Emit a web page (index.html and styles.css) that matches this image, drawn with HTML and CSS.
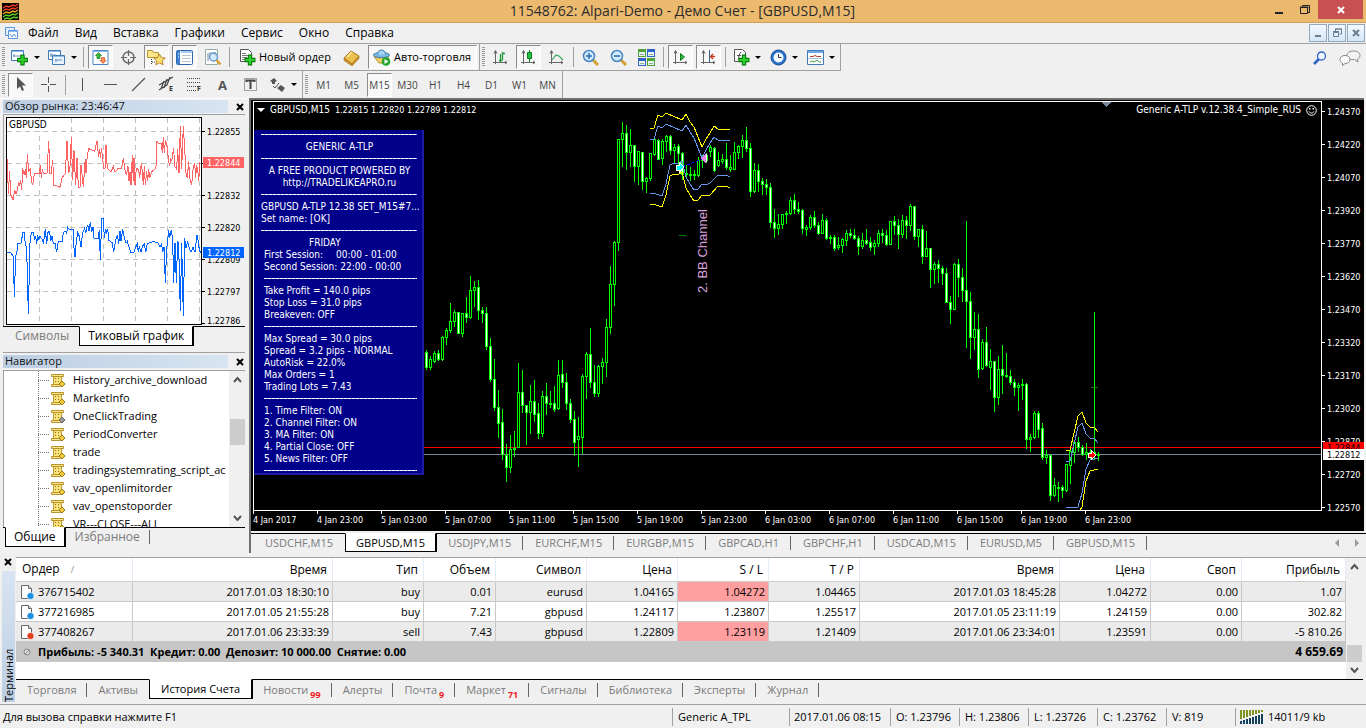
FILE: index.html
```html
<!DOCTYPE html>
<html lang="ru">
<head>
<meta charset="utf-8">
<title>11548762: Alpari-Demo - Демо Счет - [GBPUSD,M15]</title>
<link rel="stylesheet" href="styles.css">
</head>
<body>
<svg class="defs" aria-hidden="true">
  <symbol id="script" viewBox="0 0 15 15">
    <path d="M2.500 3.500h8v9h-8z" fill="#f9e27a" stroke="#c09a34"/>
    <path d="M.5 1.500h12v2H.5z" fill="#fbe88c" stroke="#b8932a"/>
    <path d="M.5 11.500h9v2h-9z" fill="#fbe88c" stroke="#b8932a"/>
    <path d="M4 5h1v1H4zM7 5h1v1H7zM4 8h1v1H4zM7 8h1v1H7z" fill="#8f6d1a"/>
  </symbol>
  <symbol id="doc" viewBox="0 0 16 16">
    <path d="M2.500 1.500h7l3 3v10h-10z" fill="#fff" stroke="#666"/>
    <path d="M9.500 1.500v3h3" fill="#ddd" stroke="#666"/>
    <circle cx="11.500" cy="12" r="3.500" fill="currentColor" stroke="#fff" stroke-width=".6"/>
  </symbol>
  <symbol id="axes" viewBox="0 0 17 17">
    <path d="M3.500 2v13M1 13.500h14M2 4.500l1.500-3 1.500 3M13 12l2 1.500-2 1.500" fill="none" stroke="#666"/>
  </symbol>
  <symbol id="plus" viewBox="0 0 11 11">
    <path d="M4 1h3v3h3v3H7v3H4V7H1V4h3z" fill="#2fd32f" stroke="#0a7d0a"/>
  </symbol>
</svg>

<header class="titlebar">
  <svg class="logo" width="17" height="17" viewBox="0 0 17 17"><path fill="#000" d="M0 0h17v17H0z"/><g fill="none" stroke-width="1.500"><path stroke="#f03a20" d="M1 5l3-2 3 1 4-2 2 1 3-2M1 8l3-2 3 1 4-2 2 1 3-2"/><path stroke="#e8b020" d="M1 11l3-2 3 1 4-2 2 1 3-2"/><path stroke="#58d020" d="M1 14l3-2 3 1 4-2 2 1 3-2M2 16l3-1 3 1 4-2 2 1 2-1"/></g></svg>
  <h1>11548762: Alpari-Demo - Демо Счет - [GBPUSD,M15]</h1>
  <div class="winbtns">
    <button aria-label="Свернуть"><svg width="12" height="12"><path d="M2 8h8v2H2z" fill="#222"/></svg></button>
    <button aria-label="Развернуть"><svg width="12" height="12"><path d="M3.500 2.500v-1h7v7h-2M1.500 3.500h7v6h-7zM1 3h8v1" fill="none" stroke="#222"/></svg></button>
    <button class="close" aria-label="Закрыть"><svg width="12" height="12"><path d="M3 3l6 6M9 3l-6 6" stroke="#fff" stroke-width="2"/></svg></button>
  </div>
</header>

<nav class="menubar">
  <svg width="16" height="16" viewBox="0 0 16 16"><path d="M1.500 2.500h9v8h-9z" fill="#e6f0fb" stroke="#5a94d8"/><path d="M4.500 5.500h9v8h-9z" fill="#fff" stroke="#5a94d8"/><path d="M5 6h8v1H5z" fill="#8fbdf0"/><path d="M6 9l2 3 2-3 2 3" fill="none" stroke="#5a94d8"/></svg>
  <button>Файл</button><button>Вид</button><button>Вставка</button><button>Графики</button><button>Сервис</button><button>Окно</button><button>Справка</button>
  <div class="mdi">
    <button aria-label="Свернуть окно"><svg width="12" height="12"><path d="M3 8h6v2H3z" fill="#6b7f92"/></svg></button>
    <button aria-label="Восстановить окно"><svg width="12" height="12"><path d="M4.500 4v-2h6v5h-2M2.500 5.500h5v4h-5z" fill="none" stroke="#6b7f92"/><path d="M2 4.500h6M4 2h7" stroke="#6b7f92"/></svg></button>
    <button aria-label="Закрыть окно"><svg width="12" height="12"><path d="M3 3l6 6M9 3l-6 6" stroke="#6b7f92" stroke-width="2"/></svg></button>
  </div>
</nav>

<div class="toolrow">
  <div class="toolbar">
    <i class="grip"></i>
    <button class="menu" aria-label="Новый график"><svg width="18" height="17" viewBox="0 0 18 17"><path d="M.5 1.500h12v10H.5z" fill="#fff" stroke="#3d7ab8"/><path d="M1 2h11v1H1z" fill="#8ebcec"/><path d="M3 8V5M2 7h8" stroke="#6a94c0"/><use href="#plus" x="5" y="5" width="13" height="12"/></svg></button>
    <button class="menu" aria-label="Профили"><svg width="18" height="17" viewBox="0 0 18 17"><path d="M.5 1.500h12v9H.5z" fill="#fff" stroke="#3d7ab8"/><path d="M4.500 6.500h12v9h-12z" fill="#e8f2fc" stroke="#3d7ab8"/><path d="M1 2h11v1H1zM5 7h11v1H5z" fill="#8ebcec"/><path d="M3 4v4M2 6h6M7 11h7M8 10v3" stroke="#6a94c0"/></svg></button>
    <i class="sep"></i>
    <button class="on" aria-label="Обзор рынка"><svg width="17" height="17" viewBox="0 0 17 17"><path d="M1 1.500h15v14H1z" fill="#fff" stroke="#4b86c6"/><path d="M1 2h15v1H1z" fill="#8ebcec"/><path d="M6.500 3.500l3 3H8v3H5v-3H3.500z" fill="#3bb83b" stroke="#178017" stroke-width=".7"/><path d="M11 14.500l3-3h-1.500v-3h-3v3H8z" fill="#ff9460" stroke="#d24a10" stroke-width=".7"/></svg></button>
    <button aria-label="Окно данных"><svg width="17" height="17" viewBox="0 0 17 17"><circle cx="8.500" cy="8.500" r="5.500" fill="none" stroke="#666" stroke-width="1.400"/><path d="M8.500 1v6M8.500 10v6M1 8.500h6M10 8.500h6" stroke="#666" stroke-width="1.200"/></svg></button>
    <button class="on" aria-label="Навигатор"><svg width="19" height="17" viewBox="0 0 19 17"><path d="M.5 3.500v-2h5l1 2h5v5h-11z" fill="#fbe58a" stroke="#b8932a"/><path d="M4.500 10v6M5 13h3" stroke="#444" stroke-dasharray="1 1"/><path d="M12.500 5l1.800 3.600 4 .5-3 2.700.8 4-3.600-2-3.600 2 .8-4-3-2.700 4-.5z" fill="#fbe070" stroke="#b8862a"/></svg></button>
    <button class="on" aria-label="Терминал"><svg width="17" height="17" viewBox="0 0 17 17"><rect x=".5" y="1.500" width="16" height="14" rx="1" fill="#fff" stroke="#2d67ad"/><path d="M1 2h3v13H1z" fill="#3b82cf"/><path d="M5 2h11v2H5z" fill="#a8cdf3"/><path d="M6 6.500h9M6 9.500h9M6 12.500h9" stroke="#b4c4d4"/><path d="M2 5h1M2 8h1" stroke="#fff"/></svg></button>
    <button aria-label="Тестер стратегий"><svg width="18" height="17" viewBox="0 0 18 17"><path d="M1.500.5h12v15h-12z" fill="#fff" stroke="#9aa"/><path d="M4 4v8M6 3v5M11 3v4" stroke="#789"/><circle cx="9.500" cy="8" r="4" fill="#c8e4fb" fill-opacity=".8" stroke="#5a94c8" stroke-width="1.300"/><path d="M12.500 11l4 4.500" stroke="#d8a030" stroke-width="2.400"/></svg></button>
    <i class="sep"></i>
    <button class="text"><svg width="17" height="18" viewBox="0 0 17 18"><path d="M1.500 1.500h8l3 3v9h-11z" fill="#fff" stroke="#555"/><path d="M3 5.500h4M3 7.500h7M3 9.500h5M3 11.500h3" stroke="#777"/><use href="#plus" x="5" y="6" width="12" height="12"/></svg>Новый ордер</button>
    <button aria-label="MetaEditor"><svg width="18" height="17" viewBox="0 0 18 17"><path d="M1 9l7-7 8 5-7 8z" fill="#edc04e" stroke="#a87820"/><path d="M1 9l8 6 7-8v2.500L9 17l-8-5.500z" fill="#c8902a" stroke="#a87820" stroke-width=".6"/><path d="M4 8l5-5" stroke="#fbe9a0" stroke-width="1.500"/></svg></button>
    <button class="on text"><svg width="18" height="17" viewBox="0 0 18 17"><path d="M1 7.500c2 2 13 2 15-.500L12 14H6z" fill="#f4d46a" stroke="#b8932a"/><ellipse cx="8.500" cy="6" rx="8" ry="2.500" fill="#7dbdea" stroke="#3d7fae"/><path d="M4.500 5.500C4.500-.5 12.500-.5 12.500 5.500" fill="#a5d5f5" stroke="#3d7fae"/><circle cx="13" cy="12.500" r="4.300" fill="#22a62e"/><path d="M11.500 10l4 2.500-4 2.500z" fill="#fff"/></svg>Авто-торговля</button>
  </div>
  <div class="toolbar">
    <i class="grip"></i>
    <button aria-label="Бары"><svg width="17" height="17"><use href="#axes"/><path d="M8.500 5v8M7 11.500h1M8.500 11.500h2M10.500 3v8M11 4.500h2" stroke="#1f9a3a" fill="none" stroke-width="1.300"/></svg></button>
    <button class="on" aria-label="Свечи"><svg width="17" height="17"><use href="#axes"/><path d="M9.500 1v12" stroke="#087a1c"/><path d="M7.500 3.500h4v6h-4z" fill="#22c043" stroke="#087a1c"/></svg></button>
    <button aria-label="Линия"><svg width="17" height="17"><use href="#axes"/><path d="M4 11l4-5 3 1 4 4" stroke="#3aa65a" fill="none" stroke-width="1.200"/></svg></button>
    <i class="sep"></i>
    <button aria-label="Увеличить"><svg width="18" height="17" viewBox="0 0 18 17"><path d="M10 10l6 6" stroke="#d0a232" stroke-width="3"/><circle cx="7" cy="7" r="5.500" fill="#d3eafc" stroke="#4284c4" stroke-width="1.500"/><path d="M4 7h6M7 4v6" stroke="#2f6fb0" stroke-width="1.600"/></svg></button>
    <button aria-label="Уменьшить"><svg width="18" height="17" viewBox="0 0 18 17"><path d="M10 10l6 6" stroke="#d0a232" stroke-width="3"/><circle cx="7" cy="7" r="5.500" fill="#d3eafc" stroke="#4284c4" stroke-width="1.500"/><path d="M4 7h6" stroke="#2f6fb0" stroke-width="1.600"/></svg></button>
    <button aria-label="Плитка"><svg width="17" height="17" viewBox="0 0 17 17"><path d="M0 0h8v8H0z" fill="#4fa336"/><path d="M9 0h8v8H9zM0 9h8v8H0z" fill="#2f62c8"/><path d="M9 9h8v8H9z" fill="#4fa336"/><path d="M1 3h6v4H1zM10 3h6v4h-6zM1 12h6v4H1zM10 12h6v4h-6z" fill="#e9f2ff"/><path d="M2 5.500h4M11 5.500h4M2 14.500h4M11 14.500h4" stroke="#8fb87c"/></svg></button>
    <i class="sep"></i>
    <button class="on" aria-label="Автопрокрутка"><svg width="17" height="17"><use href="#axes"/><path d="M8.500 4.500l4 3.500-4 3.500z" fill="#2db84a" stroke="#087a1c"/></svg></button>
    <button class="on" aria-label="Сдвиг графика"><svg width="17" height="17"><use href="#axes"/><path d="M9.500 1v12" stroke="#35629c"/><path d="M15 7.500h-4M13 5l-2.500 2.500L13 10" stroke="#c23a18" fill="none" stroke-width="1.300"/></svg></button>
    <i class="sep"></i>
    <button class="menu" aria-label="Индикаторы"><svg width="17" height="18" viewBox="0 0 17 18"><path d="M1.500 1.500h8l3 3v9h-11z" fill="#fff" stroke="#555"/><path d="M5 12c1-2 1-7 3-8M4 7.500h4" fill="none" stroke="#555"/><use href="#plus" x="5" y="6" width="12" height="12"/></svg></button>
    <button class="menu" aria-label="Периоды"><svg width="17" height="17" viewBox="0 0 17 17"><circle cx="8.500" cy="8.500" r="7.500" fill="#2a71cc" stroke="#164a90"/><circle cx="8.500" cy="8.500" r="5" fill="#f3f9ff"/><path d="M8.500 5v3.500h3" fill="none" stroke="#333"/></svg></button>
    <button class="menu" aria-label="Шаблоны"><svg width="17" height="17" viewBox="0 0 17 17"><path d="M.5 1.500h16v14H.5z" fill="#fff" stroke="#3d7ab8"/><path d="M1 2h15v2H1z" fill="#6ea9e6"/><path d="M3 7.500h3l2-1 2 1h4" fill="none" stroke="#b04030"/><path d="M1 9.500h15" stroke="#a9c6e6"/><path d="M3 13l2-1 2 1 3-2 2 2h2" fill="none" stroke="#3a9a4a"/></svg></button>
  </div>
  <div class="tools-right">
    <button aria-label="Поиск"><svg width="14" height="14" viewBox="0 0 14 14"><path d="M1 13l5-5" stroke="#2f62c8" stroke-width="2.600"/><circle cx="8.500" cy="5" r="4" fill="#eef6ff" stroke="#2f62c8" stroke-width="1.300"/></svg></button>
    <button aria-label="Чат"><svg width="22" height="16" viewBox="0 0 22 16"><path d="M14.500 1c4 0 6.500 2 6.500 4.500 0 2-1.500 3-2.500 3.500l.5 3-3.500-2.500C11 10 8 8.500 8 5.500S11 1 14.500 1z" fill="#f4f4f4" stroke="#8a8a8a"/><path d="M6 5.500c3 0 5 1.500 5 4s-2 4-5 4L3.500 15.500v-2.500C2 12.500 1 11 1 9.500c0-2.500 2-4 5-4z" fill="#fafafa" stroke="#8a8a8a"/></svg></button>
  </div>
</div>

<div class="toolrow lines">
  <div class="toolbar">
    <i class="grip"></i>
    <button class="on" aria-label="Курсор"><svg width="17" height="17"><path d="M5 1v12l3-2.500 2 4.500 2-1-2-4.500h4z" fill="#555"/></svg></button>
    <button aria-label="Перекрестие"><svg width="17" height="17"><path d="M8.500 1v6M8.500 10v6M1 8.500h6M10 8.500h6" stroke="#555"/></svg></button>
    <i class="sep"></i>
    <button aria-label="Вертикальная линия"><svg width="17" height="17"><path d="M8.500 2v13" stroke="#555"/></svg></button>
    <button aria-label="Горизонтальная линия"><svg width="17" height="17"><path d="M2 8.500h13" stroke="#555"/></svg></button>
    <button aria-label="Линия тренда"><svg width="17" height="17"><path d="M2 15L15 2" stroke="#555" stroke-width="1.200"/></svg></button>
    <button aria-label="Канал"><svg width="19" height="19"><path d="M2 10l14-8M2 15l8-5M4 14l3-8M7 13l3-9M10 10l3-8" stroke="#444" stroke-width="1.200"/><text x="12" y="16">E</text></svg></button>
    <button aria-label="Фибоначчи"><svg width="19" height="19"><path d="M2 3.500h14M2 7.500h14M2 11.500h14M2 15.500h9" stroke="#444" stroke-dasharray="1 1"/><text x="12" y="16">F</text></svg></button>
    <button class="letter" aria-label="Текст">A</button>
    <button aria-label="Метка"><svg width="17" height="17"><path d="M2.500 2.500h12v12h-12z" fill="none" stroke="#555" stroke-dasharray="1 1"/><path d="M4.500 6V4.500h8V6M8.500 5v8" stroke="#444" stroke-width="2" fill="none"/></svg></button>
    <button class="menu" aria-label="Стрелки"><svg width="17" height="17"><path d="M1 5l4-3 3 3-2 1v2H3V6zM8 12l4-3 4 3-3 4z" fill="#555"/><path d="M4 10l2 2 4-5" fill="none" stroke="#555"/></svg></button>
  </div>
  <div class="toolbar periods">
    <i class="grip"></i>
    <button>M1</button><button>M5</button><button class="on">M15</button><button>M30</button><button>H1</button><button>H4</button><button>D1</button><button>W1</button><button>MN</button>
  </div>
</div>

<main class="work">
  <aside class="side">
    <section class="panel market">
      <header><h2>Обзор рынка: 23:46:47</h2><button aria-label="Закрыть обзор рынка"><svg width="8" height="8"><path d="M1 1l6 6M7 1L1 7" stroke="#000" stroke-width="2"/></svg></button></header>
      <div class="ticks">
        <div class="tickplot">
          <span>GBPUSD</span>
          <svg viewBox="21 60 582 618" preserveAspectRatio="none">
            <g class="tickgrid"><path d="M118 60v618M214 60v618M310 60v618M406 60v618M502 60v618M598 60v618M21 100h582M21 196h582M21 292h582M21 388h582M21 484h582M21 580h582"/></g>
            <polyline class="ask" points="22,183 25,287 29,220 32,290 39,305 44,275 48,287 52,278 56,252 59,263 62,247 65,277 68,211 73,230 76,212 79,239 82,168 86,220 91,213 94,245 98,262 103,228 118,226 121,202 124,240 127,213 130,226 141,226 146,128 150,226 154,226 158,185 162,262 175,265 180,268 186,240 196,226 201,128 206,226 210,205 214,118 218,247 222,157 227,262 231,180 235,268 240,268 243,200 248,247 250,268 254,205 256,183 258,226 262,170 266,152 284,160 291,128 296,178 299,152 302,180 304,150 308,180 311,211 315,211 318,140 322,211 333,222 340,205 345,222 355,211 365,211 370,180 374,211 379,232 384,205 387,250 390,222 393,262 397,170 400,250 402,180 405,262 409,211 416,215 419,240 424,195 427,220 430,262 433,205 436,262 440,220 443,250 446,213 449,240 456,220 465,213 468,205 471,128 475,136 484,136 487,165 490,118 493,165 496,128 500,136 506,190 509,205 512,180 515,190 521,150 524,205 530,213 533,152 537,226 541,84 545,213 550,84 555,170 558,226 562,240 566,190 569,240 575,262 580,205 584,195 587,240 590,200 594,226 596,250 600,192"/>
            <polyline class="bid" points="22,463 33,465 40,475 43,598 47,475 51,458 54,435 60,437 64,435 68,403 72,403 76,437 80,450 85,647 90,435 94,403 100,403 104,425 107,415 110,437 113,410 116,427 120,415 127,425 130,437 136,393 140,437 144,403 149,400 152,430 156,415 160,437 165,435 170,463 175,430 187,430 190,403 196,400 200,405 203,388 207,393 220,393 222,450 225,478 229,430 233,403 238,415 243,447 248,405 254,390 257,405 263,380 267,400 271,372 275,403 279,388 282,420 295,420 298,395 301,487 305,361 310,361 313,420 317,393 320,403 323,393 327,427 337,435 341,463 347,425 352,410 356,437 360,400 363,430 368,393 373,420 378,435 382,430 388,450 392,463 402,463 406,450 412,437 415,463 418,445 423,463 427,445 433,437 437,463 442,437 460,430 475,435 480,447 485,437 488,463 492,447 496,556 500,450 503,430 506,395 509,420 514,395 518,425 521,556 525,435 529,556 533,430 536,440 541,640 545,435 550,655 554,420 558,450 563,430 568,450 573,463 579,447 585,463 591,410 595,430 598,457 603,465"/>
          </svg>
        </div>
        <svg class="tickaxis" width="43" height="212">
          <path d="M0 14.500h3M0 46.500h3M0 78.500h3M0 110.500h3M0 142.500h3M0 174.500h3M0 206.500h3" stroke="#000"/>
          <g><text x="5" y="18">1.22855</text><text x="5" y="82">1.22832</text><text x="5" y="114">1.22820</text><text x="5" y="146">1.22809</text><text x="5" y="178">1.22797</text><text x="5" y="207">1.22786</text></g>
          <path d="M1 40h41v11H1z" fill="#ff6464"/><path d="M1 130h41v11H1z" fill="#0064ff"/>
          <g class="inv"><text x="5" y="49">1.22844</text><text x="5" y="139">1.22812</text></g>
        </svg>
      </div>
      <div class="tabs"><button>Символы</button><button class="active">Тиковый график</button></div>
    </section>
    <section class="panel navigator">
      <header><h2>Навигатор</h2><button aria-label="Закрыть навигатор"><svg width="8" height="8"><path d="M1 1l6 6M7 1L1 7" stroke="#000" stroke-width="2"/></svg></button></header>
      <div class="treebox">
        <ul class="tree">
          <li><svg><use href="#script"/><path class="gem" d="M11 8l3 3-3 3-3-3z"/></svg>History_archive_download</li>
          <li><svg><use href="#script"/><path class="gem" d="M11 8l3 3-3 3-3-3z"/></svg>MarketInfo</li>
          <li><svg><use href="#script"/><path class="gem grey" d="M11 8l3 3-3 3-3-3z"/></svg>OneClickTrading</li>
          <li><svg><use href="#script"/><path class="gem" d="M11 8l3 3-3 3-3-3z"/></svg>PeriodConverter</li>
          <li><svg><use href="#script"/><path class="gem" d="M11 8l3 3-3 3-3-3z"/></svg>trade</li>
          <li><svg><use href="#script"/><path class="gem" d="M11 8l3 3-3 3-3-3z"/></svg>tradingsystemrating_script_ac</li>
          <li><svg><use href="#script"/><path class="gem" d="M11 8l3 3-3 3-3-3z"/></svg>vav_openlimitorder</li>
          <li><svg><use href="#script"/><path class="gem" d="M11 8l3 3-3 3-3-3z"/></svg>vav_openstoporder</li>
          <li><svg><use href="#script"/><path class="gem" d="M11 8l3 3-3 3-3-3z"/></svg>VR---CLOSE---ALL</li>
        </ul>
        <div class="scroll nav-scroll">
          <svg width="9" height="8"><path d="M1 6l3.500-4L8 6" /></svg><i></i><svg width="9" height="8"><path d="M1 2l3.500 4L8 2"/></svg>
        </div>
      </div>
      <div class="tabs"><button class="active">Общие</button><button class="bar">Избранное</button></div>
    </section>
  </aside>

  <section class="chartwin">
    <div class="chart">
      <div class="plot">
        <svg class="drawing"><g id="drawing" transform="translate(-254 -102)">
          <path d="M254 447.500h1080" stroke="#f00"/><path d="M254 454.500h1080" stroke="#778899"/>
          <path id="wicks" stroke="#0f0"/><path id="up" fill="#000" stroke="#0f0"/><path id="down" fill="#fff" stroke="#0f0"/>
          <path d="M679 235.500h7M1091 387.500h7" stroke="#008000"/>
          <g class="outer"><polyline points="650,128 654,128 658,115 662,117 666,113 682,120 686,114 690,122 694,127 702,147 706,139 710,133 714,126 718,129 726,129 730,130"/><polyline points="650,204 656,205 662,207 666,195 670,176 674,174 678,175 682,172 686,188 690,195 694,201 698,200 702,195 706,196 710,195 718,186 726,186 730,188"/><polyline points="1066,450 1070,450 1074,433 1078,416 1082,412 1086,423 1090,427 1094,427 1098,432"/><polyline points="1080,510 1082,507 1086,481 1090,471 1094,470 1098,469"/></g>
          <g class="inner"><polyline points="650,139 654,139 658,126 662,128 666,124 682,131 686,125 690,132 694,138 702,158 706,150 710,143 714,137 718,140 726,140 730,141"/><polyline points="650,193 656,194 662,196 666,184 670,165 674,163 678,164 682,161 686,177 690,184 694,190 698,189 702,184 706,185 710,183 718,175 726,175 730,177"/><polyline points="1066,461 1070,461 1074,444 1078,427 1082,423 1086,434 1090,438 1094,438 1098,443"/><polyline points="1066,507 1072,507 1074,508 1078,507 1082,493 1086,469 1090,460 1094,459 1098,458"/></g>
          <path d="M682 167l20-8" stroke="#00f" stroke-dasharray="3 2"/>
          <path d="M676 165h3v-3l5 5-5 6v-3h-3z" fill="#0ff" stroke="#fff"/>
          <path d="M706 153v11l-5-5z" fill="#ee82ee"/><path d="M706.500 154v8" stroke="#fff"/>
          <path d="M1088 453h3v-3l5 5-5 5v-3h-3z" fill="#f00" stroke="#fff"/>
          <path d="M1101 102h11l-5.500 5z" fill="#778899"/>
          <text class="note" transform="translate(707 293) rotate(-90)">2. BB Channel</text>
        </g></svg>
        <div class="caption"><svg width="8" height="5"><path d="M0 0h8L4 4z" fill="#fff"/></svg><span class="pair">GBPUSD,M15</span><span>1.22815 1.22820 1.22789 1.22812</span><span class="expert">Generic A-TLP v.12.38.4_Simple_RUS</span><svg width="11" height="11"><circle cx="5.500" cy="5.500" r="4.800" fill="none" stroke="#fff"/><path d="M3 3h1.500v1.500H3zM6.500 3H8v1.500H6.500z" fill="#fff"/><path d="M3 6.500c1 2 4 2 5 0" fill="none" stroke="#fff"/></svg></div>
        <div class="info">
          <hr><p class="mid">GENERIC A-TLP</p><hr>
          <p class="mid">A FREE PRODUCT POWERED BY</p><p class="mid">http://TRADELIKEAPRO.ru</p><hr>
          <p class="out">GBPUSD A-TLP 12.38 SET_M15#7...</p><p class="out">Set name: [OK]</p><hr>
          <p class="day">FRIDAY</p><p class="session"><span>First Session:</span>00:00 - 01:00</p><p class="session"><span>Second Session:</span>22:00 - 00:00</p><hr class="short">
          <p>Take Profit = 140.0 pips</p><p>Stop Loss = 31.0 pips</p><p>Breakeven: OFF</p><hr class="short">
          <p>Max Spread = 30.0 pips</p><p>Spread = 3.2 pips - NORMAL</p><p>AutoRisk = 22.0%</p><p>Max Orders = 1</p><p>Trading Lots = 7.43</p><hr class="short">
          <p>1. Time Filter: ON</p><p>2. Channel Filter: ON</p><p>3. MA Filter: ON</p><p>4. Partial Close: OFF</p><p>5. News Filter: OFF</p><hr class="short">
        </div>
      </div>
      <svg class="prices" id="prices" width="42" height="416"></svg>
      <div class="times"><span>4 Jan 2017</span><span>4 Jan 23:00</span><span>5 Jan 03:00</span><span>5 Jan 07:00</span><span>5 Jan 11:00</span><span>5 Jan 15:00</span><span>5 Jan 19:00</span><span>5 Jan 23:00</span><span>6 Jan 03:00</span><span>6 Jan 07:00</span><span>6 Jan 11:00</span><span>6 Jan 15:00</span><span>6 Jan 19:00</span><span>6 Jan 23:00</span></div>
    </div>
    <div class="tabs charttabs"><button>USDCHF,M15</button><button class="active">GBPUSD,M15</button><button class="bar">USDJPY,M15</button><button class="bar">EURCHF,M15</button><button class="bar">EURGBP,M15</button><button class="bar">GBPCAD,H1</button><button class="bar">GBPCHF,H1</button><button class="bar">USDCAD,M15</button><button class="bar">EURUSD,M5</button><button class="bar">GBPUSD,M15</button>
      <svg width="24" height="8"><path d="M4 0v8L0 4zM20 0v8l4-4z" fill="#999"/></svg></div>
  </section>
</main>

<section class="terminal">
  <div class="strip"><button aria-label="Закрыть терминал"><svg width="8" height="8"><path d="M1 1l6 6M7 1L1 7" stroke="#000" stroke-width="2"/></svg></button><h2>Терминал</h2></div>
  <div class="termbody">
    <div class="tablewrap">
      <table>
        <colgroup><col class="c-order"><col class="c-time"><col class="c-price"><col class="c-vol"><col class="c-price"><col class="c-price"><col class="c-price"><col class="c-price"><col class="c-time"><col class="c-price"><col class="c-price"><col></colgroup>
        <thead><tr><th>Ордер <small>/</small></th><th>Время</th><th>Тип</th><th>Объем</th><th>Символ</th><th>Цена</th><th>S / L</th><th>T / P</th><th>Время</th><th>Цена</th><th>Своп</th><th>Прибыль</th></tr></thead>
        <tbody>
          <tr><td><svg class="buy"><use href="#doc"/></svg>376715402</td><td>2017.01.03 18:30:10</td><td>buy</td><td>0.01</td><td>eurusd</td><td>1.04165</td><td class="hit">1.04272</td><td>1.04465</td><td>2017.01.03 18:45:28</td><td>1.04272</td><td>0.00</td><td>1.07</td></tr>
          <tr><td><svg class="buy"><use href="#doc"/></svg>377216985</td><td>2017.01.05 21:55:28</td><td>buy</td><td>7.21</td><td>gbpusd</td><td>1.24117</td><td>1.23807</td><td>1.25517</td><td>2017.01.05 23:11:19</td><td>1.24159</td><td>0.00</td><td>302.82</td></tr>
          <tr><td><svg class="sell"><use href="#doc"/></svg>377408267</td><td>2017.01.06 23:33:39</td><td>sell</td><td>7.43</td><td>gbpusd</td><td>1.22809</td><td class="hit">1.23119</td><td>1.21409</td><td>2017.01.06 23:34:01</td><td>1.23591</td><td>0.00</td><td>-5 810.26</td></tr>
        </tbody>
        <tfoot><tr><td colspan="11"><svg><circle cx="8" cy="8" r="3" fill="#ddd" stroke="#888"/><path d="M6 10l4-4" stroke="#888"/></svg>Прибыль: -5 340.31&nbsp; Кредит: 0.00&nbsp; Депозит: 10 000.00&nbsp; Снятие: 0.00</td><td>4 659.69</td></tr></tfoot>
      </table>
      <div class="scroll term-scroll"><svg width="9" height="8"><path d="M1 6l3.500-4L8 6"/></svg><i></i><svg width="9" height="8"><path d="M1 2l3.500 4L8 2"/></svg></div>
    </div>
    <div class="tabs termtabs"><button class="bar">Торговля</button><button>Активы</button><button class="active">История Счета</button><button class="bar">Новости<sub>99</sub></button><button class="bar">Алерты</button><button class="bar">Почта<sub>9</sub></button><button class="bar">Маркет<sub>71</sub></button><button class="bar">Сигналы</button><button class="bar">Библиотека</button><button class="bar">Эксперты</button><button class="bar">Журнал</button></div>
  </div>
</section>

<footer class="status">
  <span class="help">Для вызова справки нажмите F1</span><span class="s-wide">Generic A_TPL</span><span class="s-date">2017.01.06 08:15</span><span>O: 1.23796</span><span>H: 1.23806</span><span>L: 1.23726</span><span>C: 1.23762</span><span>V: 819</span>
  <span class="s-net"><svg width="24" height="14"><path d="M1 0v9M4 0v8M7 0v7M10 0v6M13 0v5M16 0v4M19 0v3M22 0v2" stroke="#7d9220" stroke-width="2"/><path d="M1 11v3M4 10v4M7 9v5M10 8v6M13 7v7M16 6v8M19 5v9M22 4v10" stroke="#12405e" stroke-width="2"/></svg>14011/9 kb</span>
</footer>
<script src="chart.js"></script>
</body>
</html>
```

FILE: styles.css
```css
:root {
  --ui: "Open Sans", "Noto Sans", sans-serif;
  --tahoma: "DejaVu Sans Condensed", "Open Sans", sans-serif;
  --face: #f0f0f0;
  --line: #a0a0a0;
}
* { box-sizing: border-box; }
body {
  margin: 0;
  min-height: 100vh;
  display: flex;
  flex-direction: column;
  background: var(--face);
  color: #000;
  font: 11px/16px var(--ui);
}
button { margin: 0; padding: 0; border: 0; background: none; font: inherit; color: inherit; white-space: nowrap; }
svg { display: block; flex: none; }
h1, h2, p, ul { margin: 0; padding: 0; font-weight: normal; }
.defs { position: absolute; width: 0; height: 0; }

.titlebar { display: flex; align-items: center; height: 23px; background: #ebba6f; border-bottom: 1px solid #cda05c; }
.titlebar .logo { margin-left: 2px; }
.titlebar h1 { flex: 1; padding-left: 80px; text-align: center; font-size: 14px; line-height: 22px; color: #2b2b2b; }
.winbtns { display: flex; align-self: flex-start; align-items: center; }
.winbtns button { width: 26px; height: 19px; display: grid; place-items: center; }
.winbtns .close { width: 45px; margin-right: 3px; background: #c75050; }

.menubar { display: flex; align-items: center; height: 21px; padding-left: 4px; border-bottom: 1px solid var(--line); font-size: 12px; }
.menubar > button { padding: 0 8px; }
.mdi { display: flex; gap: 1px; margin: 0 1px 0 auto; }
.mdi button { width: 18px; height: 18px; display: grid; place-items: center; border: 1px solid #93a9bf; background: linear-gradient(#f4f9fe, #d5e6f6); }

.toolrow { display: flex; height: 27px; }
.toolbar { display: flex; align-items: center; gap: 3px; padding: 0 2px; border-right: 1px solid var(--line); border-bottom: 1px solid var(--line); }
.toolbar button { display: flex; align-items: center; justify-content: center; gap: 3px; min-width: 25px; height: 24px; border: 1px solid transparent; }
.toolbar .on { border-color: #8c8c8c #fff #fff #8c8c8c; background: #f8f8f8; }
.toolbar .menu { width: 34px; gap: 5px; }
.toolbar .menu::after { content: ""; border: 3px solid transparent; border-top-color: #000; border-bottom: 0; }
.toolbar .text { padding: 0 5px 0 4px; }
.grip { width: 3px; height: 20px; background: repeating-linear-gradient(#999 0 1px, #f0f0f0 1px 2px); }
.sep { width: 1px; height: 20px; margin: 0 1px; background: var(--line); }
.tools-right { display: flex; align-items: center; gap: 12px; margin: 0 5px 0 auto; }
.lines .toolbar { border-bottom: 0; }
.lines text { font: bold 7px var(--ui); fill: #333; }
.letter { font: bold 13px var(--ui); color: #555; }
.periods { font: 10px "Open Sans", sans-serif; color: #444; }

.work { display: flex; flex: 1; }
.side { width: 249px; padding: 1px 4px 0 3px; display: flex; flex-direction: column; border-top: 1px solid #fff; }
.panel header { display: flex; align-items: center; justify-content: space-between; height: 13px; padding-right: 1px; }
.panel h2 { flex: 1; margin-right: 8px; padding-left: 2px; height: 13px; background: linear-gradient(90deg, #bccee3, #d8e4f1); color: #111; font-size: 11px; line-height: 12px; }
.market { height: 252px; }
.navigator { padding-top: 2px; border-top: 1px solid var(--line); }
.ticks { display: flex; height: 212px; margin-top: 1px; padding: 2px 0 0 2px; border: solid var(--line); border-width: 1px 0 0 1px; }
.tickplot { position: relative; flex: 1; height: 208px; border: 1px solid #000; background: #fff; }
.tickplot svg { width: 100%; height: 100%; shape-rendering: crispEdges; }
.tickplot span { position: absolute; left: 2px; top: 1px; background: #fff; font: 10px/12px var(--tahoma); }
.tickplot polyline, .tickgrid path { fill: none; vector-effect: non-scaling-stroke; }
.tickgrid path { stroke: #c0c0c0; stroke-dasharray: 5 4; }
.ask { stroke: #ff6464; }
.bid { stroke: #0064ff; }
.tickaxis text { font: 9px var(--tahoma); }
.tickaxis .inv { fill: #fff; }

.tabs { display: flex; align-items: flex-start; border-top: 1px solid #000; color: #7b7b7b; }
.tabs button { padding: 0 10px; height: 18px; }
.tabs .active { margin-top: -1px; height: 20px; background: #fff; color: #000; border: 1px solid #000; border-top-color: #fff; box-shadow: 1px 0 0 #000; }
.tabs .bar { background: linear-gradient(#666, #666) right center / 1px 14px no-repeat; }
.side .tabs { padding-left: 2px; font-size: 12px; }
.side .tabs .active { padding: 0 8px; }
.treebox { display: flex; height: 157px; margin-top: 2px; border: solid var(--line); border-width: 1px 0 0 1px; background: #fff; }
.tree { flex: 1; overflow: hidden; list-style: none; margin-left: 34px; background: repeating-linear-gradient(#777 0 1px, #fff 1px 2px) 0 0 / 1px 100% no-repeat; }
.tree li { display: flex; align-items: center; height: 18px; line-height: 18px; white-space: nowrap; }
.tree li::before { content: ""; width: 11px; margin-right: 2px; border-top: 1px dotted #777; flex: none; }
.tree svg { width: 15px; height: 15px; margin-right: 7px; }
.gem { fill: #f0c83c; stroke: #9c7a18; }
.gem.grey { fill: #999; stroke: #666; }
.scroll { display: flex; flex-direction: column; align-items: center; justify-content: space-between; width: 16px; padding: 5px 0; background: var(--face); }
.scroll path { fill: none; stroke: #555; stroke-width: 2; }
.scroll i { width: 15px; background: #cdcdcd; }
.nav-scroll i { height: 26px; margin-bottom: 34px; }
.term-scroll i { height: 17px; margin-top: 69px; }

.chartwin { flex: 1; min-width: 0; display: flex; flex-direction: column; border-left: 2px solid #707070; }
.chart { flex: 1; display: grid; grid-template-columns: 1fr 42px; grid-template-rows: 416px auto; margin-right: 2px; padding: 1px 0 0 2px; background: #000; border-top: 2px solid #707070; color: #fff; font: 9px/12px var(--tahoma); }
.plot { position: relative; height: 410px; overflow: hidden; border: 1px solid #fff; }
.drawing { position: absolute; left: 0; top: 0; width: 100%; height: 100%; shape-rendering: crispEdges; }
.outer, .inner { fill: none; }
.outer { stroke: #ff0; }
.inner { stroke: #6495ed; }
.note { fill: #dda0dd; font: 13px "Liberation Sans", sans-serif; }
.caption { position: relative; display: flex; align-items: center; gap: 5px; padding: 2px 4px 0 3px; }
.caption .pair { font-size: 10px; }
.expert { margin-left: auto; font-size: 10px; }
.info { position: absolute; left: 0; top: 28px; width: 170px; padding: 1px 7px 1px 10px; background: #00008b; border: solid #1c1ca4; border-width: 0 2px 2px 0; white-space: nowrap; font-size: 10px; }
.info p { height: 12px; }
.info .mid { text-align: center; }
.info .out { margin-left: -3px; }
.info .day { padding-left: 45px; }
.info .session { display: flex; gap: 3px; }
.info hr { height: 2px; margin: 5px -2px 5px -3px; border: 0; background: repeating-linear-gradient(90deg, #fff 0 3px, #a8a8dc 3px 4px) 0 0 / 100% 1px no-repeat; }
.info hr:first-child { margin-top: 3px; }
.info hr:last-child { margin-bottom: 0; }
.info hr.short { margin-left: 0; }
.session span { min-width: 69px; }
.prices text { font: 9px var(--tahoma); fill: #fff; }
.prices .dark { fill: #000; }
.times { grid-column: 1 / 3; display: flex; height: 20px; margin-top: -6px; overflow: hidden; }
.times span { flex: none; width: 64px; padding-top: 3px; background: linear-gradient(#fff, #fff) 0 0 / 1px 3px no-repeat; }
.charttabs { margin-top: 2px; height: 20px; }
.charttabs button { padding: 0 12px; }
.charttabs .active { height: 19px; padding: 0 10px; }
.charttabs > svg { margin: 5px 7px 0 auto; }
.charttabs button:first-child { padding-left: 14px; }

.terminal { display: flex; height: 152px; padding-top: 4px; border-bottom: 1px solid var(--line); }
.strip { display: flex; flex-direction: column; width: 16px; align-items: center; gap: 5px; padding-top: 1px; }
.strip h2 { flex: 1; width: 13px; margin-bottom: 2px; line-height: 13px; writing-mode: vertical-rl; transform: rotate(180deg); background: linear-gradient(#bccee3, #d8e4f1); font-size: 11px; }
.termbody { flex: 1; min-width: 0; border-top: 1px solid var(--line); }
.tablewrap { display: flex; align-items: stretch; height: 121px; margin-right: 4px; background: #fff; }
table { flex: 1; align-self: flex-start; width: 100%; table-layout: fixed; border-collapse: separate; border-spacing: 0; }
.c-order { width: 117px; }
.c-time { width: 200px; }
.c-price { width: 91px; }
.c-vol { width: 72px; }
th, td { padding: 0 3px 0 0; text-align: right; font-weight: normal; white-space: nowrap; overflow: hidden; }
th { height: 24px; padding-right: 5px; border-right: 1px solid #e2ecf6; border-bottom: 1px solid #ccc; font-size: 12px; }
th small { margin-left: 8px; color: #888; font-size: 9px; }
tbody td { height: 20px; border-right: 1px solid #c8c8c8; border-bottom: 1px solid #c8c8c8; }
tbody tr:nth-child(odd) { background: #ebebeb; }
tbody td.hit { background: #ff9f9f; }
th:first-child { padding-left: 6px; text-align: left; }
td:first-child { text-align: left; }
td svg { float: left; width: 16px; height: 16px; margin: 0 3px 0 3px; }
.buy { color: #1c8fe0; }
.sell { color: #e0401c; }
tfoot td { height: 20px; background: #c6c6c6; font-weight: bold; }
tfoot td:last-child { font-size: 12px; }
.termtabs { margin-right: 3px; height: 25px; }
.termtabs button { height: 20px; padding: 0 11px; }
sub { margin-left: 2px; color: #f01820; font-size: 9px; font-weight: bold; line-height: 0; vertical-align: -4px; }

.status { display: flex; align-items: center; height: 23px; padding-left: 3px; }
.status span { width: 69px; padding-left: 5px; line-height: 18px; border-left: 1px solid var(--line); white-space: nowrap; }
.status .help { flex: 1; padding: 0; border: 0; }
.status .s-wide { width: 117px; }
.status .s-date { width: 101px; padding-left: 4px; }
.status .s-net { display: flex; align-items: center; gap: 4px; width: 131px; padding-left: 4px; }
```

FILE: chart.js
```js
// Candles, four pixels apart: high, body top, body bottom, low, falling
const candles = [
  [350,352,367,369,1],[356,359,367,369,0],[351,353,361,362,0],[350,353,359,360,1],[336,337,359,360,0],[328,330,337,344,0],
  [303,321,330,332,0],[310,312,321,326,0],[312,312,333,333,1],[313,313,333,336,0],[297,313,317,322,1],[276,290,317,318,0],
  [281,287,290,306,0],[280,287,310,319,1],[307,310,313,322,1],[307,313,346,349,1],[338,346,379,381,1],[359,379,407,410,1],
  [390,407,423,437,1],[409,422,454,459,1],[444,455,467,481,1],[435,449,467,472,0],[431,448,449,456,1],[363,392,447,447,0],
  [370,392,405,412,1],[405,405,412,444,1],[385,401,412,433,0],[380,401,414,421,1],[403,413,433,438,1],[391,396,433,436,0],
  [383,396,403,414,1],[391,403,404,407,1],[386,403,409,411,1],[360,375,408,409,0],[360,374,382,387,1],[373,382,403,409,1],
  [399,403,419,422,1],[411,419,442,455,1],[417,436,439,466,0],[374,376,437,453,0],[352,354,376,398,0],[328,354,382,387,1],
  [365,382,393,396,1],[365,366,393,396,0],[358,362,366,383,0],[319,327,362,376,0],[266,284,327,333,0],[241,242,284,305,0],
  [139,139,242,250,0],[122,133,139,166,0],[125,133,152,169,1],[129,145,152,166,0],[145,145,166,181,1],[151,151,166,184,0],
  [152,152,181,189,1],[177,178,181,192,0],[153,153,178,180,0],[139,139,154,155,0],[139,140,159,159,1],[139,141,158,164,0],
  [135,136,141,151,0],[135,136,150,154,1],[144,147,150,163,0],[144,146,153,166,1],[152,153,174,179,1],[165,173,174,178,1],
  [167,174,175,180,0],[170,174,175,179,0],[157,160,175,176,0],[155,156,160,167,0],[153,155,160,162,1],[145,147,151,156,0],
  [147,148,170,171,1],[152,160,165,166,0],[154,159,161,163,0],[143,159,167,169,1],[155,167,169,171,0],[142,152,169,169,0],
  [145,146,152,158,0],[135,140,146,157,0],[127,140,148,151,1],[143,148,191,196,1],[163,170,191,192,0],[164,170,181,191,1],
  [178,181,184,194,1],[179,184,187,194,1],[183,187,222,227,1],[209,222,228,237,1],[214,224,228,234,0],[214,214,224,228,0],
  [211,213,214,223,1],[197,200,213,214,0],[194,200,209,213,1],[202,209,211,213,1],[209,210,228,233,1],[225,227,229,235,0],
  [215,217,227,229,0],[211,217,225,227,1],[222,225,233,234,1],[214,220,233,233,0],[218,220,238,239,1],[235,237,238,243,1],
  [235,237,248,250,1],[237,245,247,249,0],[238,239,245,252,0],[230,233,240,245,0],[229,233,235,237,1],[229,235,238,239,1],
  [236,238,246,254,1],[233,240,246,248,0],[229,240,243,244,1],[237,242,247,250,1],[240,243,246,254,0],[230,233,243,246,0],
  [229,233,235,242,1],[230,235,244,245,1],[221,221,244,244,0],[216,221,225,234,1],[219,225,234,248,1],[215,220,234,237,0],
  [216,220,225,238,1],[204,206,225,230,0],[206,206,236,239,1],[229,229,236,246,0],[225,229,256,263,1],[231,248,256,256,0],
  [248,248,269,287,1],[262,264,269,283,0],[260,264,268,282,1],[266,268,273,284,1],[268,273,302,302,1],[296,302,309,323,1],
  [263,264,309,309,0],[259,264,277,296,1],[268,277,290,301,1],[221,290,301,347,1],[292,301,337,358,1],[312,329,337,349,0],
  [314,329,369,377,1],[339,342,368,369,0],[327,342,365,366,1],[349,361,367,389,0],[361,361,397,411,1],[356,369,397,404,0],
  [345,369,375,393,1],[353,375,376,377,1],[370,376,382,384,1],[379,382,387,395,1],[383,385,387,410,0],[379,384,385,399,0],
  [383,384,439,448,1],[434,437,439,451,0],[411,413,437,438,0],[411,413,429,437,1],[423,428,457,459,1],[450,455,457,463,0],
  [455,455,495,500,1],[478,485,495,496,0],[482,487,488,501,1],[485,487,490,497,1],[464,464,490,491,0],[450,451,465,483,0],
  [440,442,452,462,0],[437,442,447,451,1],[445,447,454,455,1],[443,452,454,459,0],[449,452,455,459,1],[312,452,455,459,1],
  [452,454,455,460,0]
];
const shapes = { wicks: "", up: "", down: "" };
candles.forEach(([high, top, bottom, low, falling], i) => {
  const x = 426 + i * 4;
  shapes.wicks += `M${x + 0.5} ${high}V${low + 1}`;
  shapes[falling ? "down" : "up"] += `M${x - 0.5} ${top + 0.5}h2V${bottom + 0.5}h-2z`;
});
for (const id in shapes) document.getElementById(id).setAttribute("d", shapes[id]);

// Price scale with the ask and bid marks
let scale = "";
for (let i = 0; i < 13; i++) {
  const y = 10 + i * 33;
  scale += `<path d="M0 ${y}.5h3" stroke="#fff"/><text x="5" y="${y + 4}">${(1.2437 - i * 0.0015).toFixed(5)}</text>`;
}
scale += '<path d="M1 341h41v11H1z" fill="#f00"/><text class="dark" x="5" y="350">1.22844</text>';
scale += '<path d="M1 348h41v11H1z" fill="#fff"/><text class="dark" x="5" y="357">1.22812</text>';
document.getElementById("prices").innerHTML = scale;
```
